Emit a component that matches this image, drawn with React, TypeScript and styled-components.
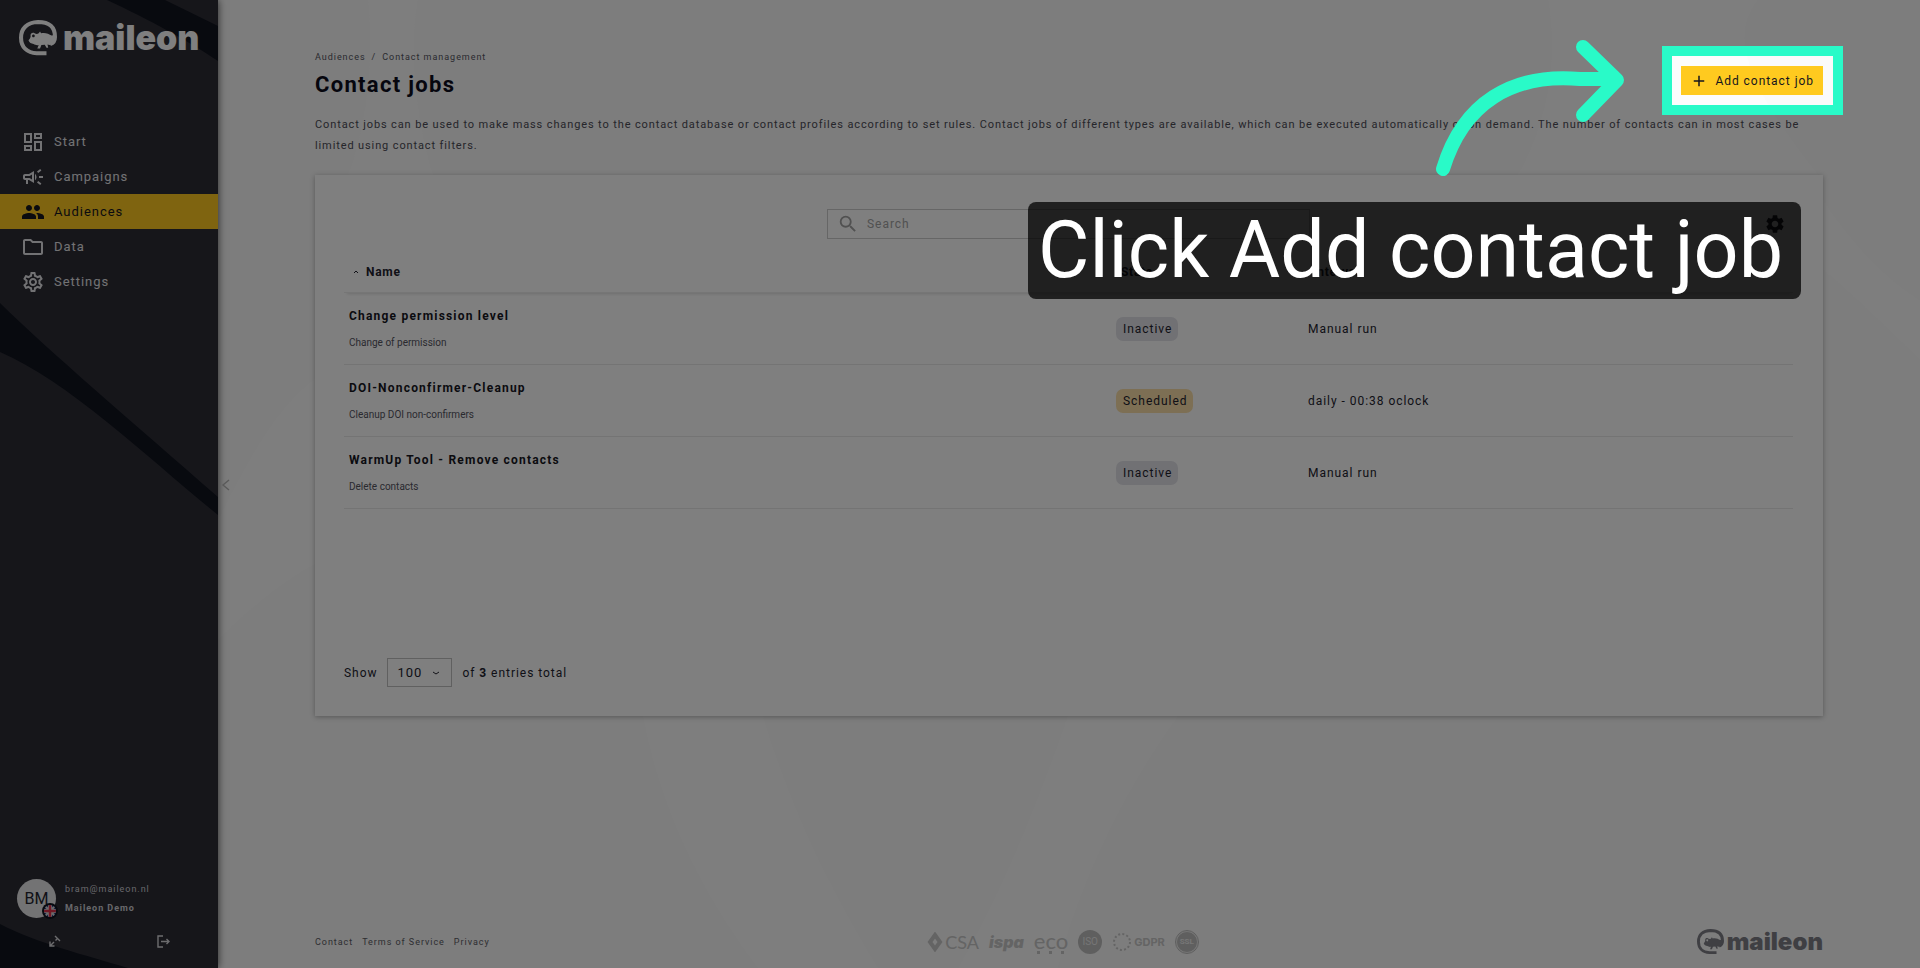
import React from 'react';
import styled, { createGlobalStyle } from 'styled-components';
import {
  MdOutlineDashboard,
  MdOutlineCampaign,
  MdPeople,
  MdOutlineFolder,
  MdOutlineSettings,
  MdSettings,
  MdSearch,
  MdAdd,
} from 'react-icons/md';

const tracking = '0.08em';

const GlobalStyle = createGlobalStyle`
  * { box-sizing: border-box; }
  body {
    margin: 0;
    background: #fafafa;
    color: #22222e;
    font-family: Roboto, "Liberation Sans", sans-serif;
    font-size: 12px;
    line-height: 20px;
    letter-spacing: ${tracking};
  }
  button, input, select { font: inherit; letter-spacing: inherit; color: inherit; }
  a { color: inherit; text-decoration: none; }
`;

const Page = styled.div`
  display: flex;
  min-height: 100vh;
`;

/* ---------- sidebar ---------- */

const Sidebar = styled.aside`
  position: relative;
  z-index: 1;
  flex: none;
  width: 218px;
  display: flex;
  flex-direction: column;
  background: #2c2c35;
  color: #d9d9dd;
  box-shadow: 0 0 8px rgba(0, 0, 0, 0.7);
`;

const SidebarWaves = styled.svg`
  position: absolute;
  inset: 0;
  z-index: -1;
  width: 100%;
  height: 100%;
`;

const Brand = styled.a<{ $small?: boolean }>`
  display: flex;
  align-items: center;
  gap: ${(p) => (p.$small ? '3px' : '6px')};
  padding: ${(p) => (p.$small ? '0' : '20px 0 0 19px')};
  color: ${(p) => (p.$small ? '#7e7e86' : '#ffffff')};
  font-family: Inter, "Liberation Sans", sans-serif;
  font-size: ${(p) => (p.$small ? '24px' : '34px')};
  line-height: ${(p) => (p.$small ? '26px' : '36px')};
  font-weight: 900;
  letter-spacing: 0;
`;

const Nav = styled.nav`
  display: flex;
  flex-direction: column;
  margin-top: 68px;
`;

const NavItem = styled.a<{ $active?: boolean }>`
  display: flex;
  align-items: center;
  gap: 9px;
  height: 35px;
  padding-left: 21px;
  background: ${(p) => (p.$active ? '#ffc821' : 'transparent')};
  color: ${(p) => (p.$active ? '#16161e' : '#e4e4e8')};
  font-size: 13px;
  svg { width: 24px; height: 24px; }
`;

const Account = styled.div`
  display: flex;
  align-items: center;
  gap: 9px;
  margin-top: auto;
  padding-left: 17px;
`;

const Avatar = styled.div`
  position: relative;
  display: grid;
  place-items: center;
  width: 39px;
  height: 39px;
  border-radius: 50%;
  background: #e6e6e8;
  color: #22222e;
  font-size: 16px;
  letter-spacing: 0;
`;

const Flag = styled.svg`
  position: absolute;
  right: -2px;
  bottom: -1px;
  width: 16px;
  height: 16px;
`;

const AccountText = styled.div`
  display: flex;
  flex-direction: column;
  font-size: 9px;
  line-height: 19px;
  color: #d0d0d6;
`;

const AccountActions = styled.div`
  display: flex;
  justify-content: space-between;
  padding: 15px 47px 19px;
`;

const IconButton = styled.button`
  display: grid;
  place-items: center;
  padding: 0;
  border: 0;
  background: none;
  cursor: pointer;
`;

const CollapseButton = styled(IconButton)`
  position: absolute;
  left: 100%;
  top: 50%;
  width: 16px;
  height: 16px;
  margin-top: -7px;
  color: #b4b4b4;
`;

/* ---------- main column ---------- */

const Main = styled.main`
  position: relative;
  flex: 1;
  min-width: 0;
  display: flex;
  flex-direction: column;
  padding: 47px 97px 11px 97px;
`;

const Backdrop = styled.svg`
  position: absolute;
  inset: 0;
  z-index: -1;
  width: 100%;
  height: 100%;
`;

const Header = styled.header`
  display: flex;
  justify-content: space-between;
  align-items: flex-start;
`;

const Crumbs = styled.div`
  display: flex;
  gap: 6px;
  font-size: 9px;
  color: #55555f;
`;

const Title = styled.h1`
  margin: 2px 0 0;
  font-size: 22px;
  line-height: 32px;
  font-weight: 700;
  letter-spacing: 0.06em;
  color: #0c0c1c;
`;

const Intro = styled.p`
  margin: 13px 0 19px;
  font-size: 11px;
  line-height: 21px;
  letter-spacing: ${tracking};
  color: #4c4c56;
`;

const Spotlight = styled.div`
  position: relative;
  z-index: 10;
  margin-top: 19px;
`;

const AddButton = styled.button`
  display: flex;
  align-items: center;
  gap: 7px;
  height: 29px;
  padding: 0 9px;
  border: 0;
  background: #ffca1f;
  color: #16161e;
  white-space: nowrap;
  cursor: pointer;
  svg { width: 18px; height: 18px; }
`;

const SpotlightFrame = styled.div`
  position: absolute;
  inset: -20px -20px -20px -19px;
  border: 10px solid #29fac8;
  box-shadow: 0 0 0 9999px rgba(0, 0, 0, 0.5);
  pointer-events: none;
`;

const SpotlightArrow = styled.svg`
  position: absolute;
  right: 199px;
  top: -27px;
  width: 190px;
  height: 140px;
  pointer-events: none;
`;

const SpotlightTip = styled.div`
  position: absolute;
  right: 22px;
  top: 136px;
  padding: 0 18px 0 10px;
  border-radius: 8px;
  background: rgba(0, 0, 0, 0.75);
  color: #ffffff;
  font-size: 79px;
  line-height: 97px;
  letter-spacing: 0;
  white-space: nowrap;
  pointer-events: none;
`;

const Card = styled.section`
  display: flex;
  flex-direction: column;
  min-height: 541px;
  padding: 34px 30px 29px 29px;
  background: #ffffff;
  box-shadow: 0 1px 5px rgba(0, 0, 0, 0.3);
`;

const Toolbar = styled.div`
  display: grid;
  grid-template-columns: 1fr 483px 1fr;
  align-items: center;
`;

const SearchBox = styled.label`
  grid-column: 2;
  display: flex;
  align-items: center;
  gap: 8px;
  height: 30px;
  padding-left: 9px;
  border: 1px solid #cccccc;
  color: #a2a2a2;
  svg { width: 22px; height: 22px; }
`;

const SearchInput = styled.input`
  flex: 1;
  min-width: 0;
  padding: 0;
  border: 0;
  outline: 0;
  background: none;
  &::placeholder { color: #a2a2a2; opacity: 1; }
`;

const GearButton = styled(IconButton)`
  justify-self: end;
  margin-right: 7px;
  color: #22222e;
  svg { width: 22px; height: 22px; }
`;

const Table = styled.table`
  width: 100%;
  margin-top: 11px;
  table-layout: fixed;
  border-collapse: separate;
  border-spacing: 0;
`;

const Th = styled.th<{ $width?: string }>`
  width: ${(p) => p.$width ?? 'auto'};
  height: 43px;
  padding: 2px 10px 0;
  text-align: left;
  font-size: 12px;
  font-weight: 700;
  letter-spacing: 0.06em;
  border-bottom: 1px solid #ececec;
`;

const HeadRow = styled.tr`
  box-shadow: 0 4px 3px -3px rgba(0, 0, 0, 0.14);
`;

const SortLabel = styled.span`
  display: flex;
  align-items: center;
  gap: 8px;
`;

const Td = styled.td`
  height: 72px;
  padding: 0 5px;
  border-bottom: 1px solid #e8e8e8;
`;

const JobName = styled.div`
  padding-top: 2px;
  font-weight: 700;
  letter-spacing: 0.1em;
  color: #16161e;
`;

const JobKind = styled.div`
  margin-top: 7px;
  font-size: 10px;
  letter-spacing: 0;
  color: #55555f;
`;

const Badge = styled.span<{ $tone: 'idle' | 'scheduled' }>`
  display: inline-block;
  padding: 0 6px 0 7px;
  border-radius: 7px;
  line-height: 24px;
  background: ${(p) => (p.$tone === 'idle' ? '#e3e3e9' : '#fbdfa8')};
`;

const Pager = styled.div`
  display: flex;
  align-items: center;
  gap: 10px;
  margin-top: auto;
`;

const PageSize = styled.label`
  display: flex;
  align-items: center;
  gap: 10px;
`;

const SelectBox = styled.span`
  display: grid;
  align-items: center;
  width: 65px;
  height: 29px;
  border: 1px solid #c0c0c0;
  > * { grid-area: 1 / 1; }
  svg { justify-self: end; margin-right: 12px; pointer-events: none; }
`;

const Select = styled.select`
  appearance: none;
  height: 100%;
  padding: 0 9px;
  border: 0;
  background: none;
  font-size: 13px;
`;

const Footer = styled.footer`
  display: grid;
  grid-template-columns: 1fr auto 1fr;
  align-items: center;
  margin-top: auto;
  padding-bottom: 2px;
`;

const FooterLinks = styled.nav`
  display: flex;
  gap: 9px;
  font-size: 9px;
  color: #5c5c64;
`;

const Seals = styled.div`
  display: flex;
  align-items: center;
  gap: 10px;
  padding-right: 12px;
  color: #c8c8c8;
`;

const Seal = styled.span`
  display: flex;
  align-items: center;
  gap: 2px;
  font-family: Lato, sans-serif;
  font-size: 18px;
  letter-spacing: 0;
`;

const IspaSeal = styled(Seal)`
  font-family: Inter, sans-serif;
  font-size: 16px;
  font-style: italic;
  font-weight: 900;
`;

const EcoSeal = styled(Seal)`
  flex-direction: column;
  gap: 0;
  font-size: 22px;
  line-height: 20px;
`;

const GdprSeal = styled(Seal)`
  font-family: Inter, sans-serif;
  font-size: 11px;
  font-weight: 700;
`;

const RoundSeal = styled.span`
  display: grid;
  place-items: center;
  width: 24px;
  height: 24px;
  border-radius: 50%;
  background: #bebebe;
  color: #ececec;
  font-size: 10px;
  letter-spacing: 0;
`;

const RingSeal = styled(RoundSeal)`
  width: 22px;
  height: 22px;
  margin: 0 1px;
  border: 1px solid #ececec;
  outline: 1px solid #bebebe;
  font-size: 8px;
  font-weight: 700;
`;

const FooterBrand = styled.div`
  justify-self: end;
`;

function Chameleon({ width }: { width: number }) {
  return (
    <svg width={width} viewBox="0 0 112 104" fill="none" aria-hidden="true">
      <path
        d="M81 98H52C24 97 6 80 6 52C6 25 24 7 56 6C88 6 106 18 106 50C106 62 101 68 92 71"
        stroke="currentColor"
        strokeWidth="12"
      />
      <path
        d="M28 60C33 54 35 50 34 45C34 39 40 36 46 39C50 40 52 43 58 39L62 34L65 39C76 36 88 40 96 46L108 44C110 62 102 72 90 74L84 72L86 82H81L76 73L66 74L62 84H54L58 74C52 76 47 73 43 71C36 70 30 67 28 60ZM42 43a4 4 0 1 0 1 0Z"
        fill="currentColor"
        fillRule="evenodd"
      />
    </svg>
  );
}

function UkFlag() {
  return (
    <Flag viewBox="0 0 16 16" role="img" aria-label="English">
      <clipPath id="flag-disc">
        <circle cx="8" cy="8" r="6" />
      </clipPath>
      <circle cx="8" cy="8" r="8" fill="#10141e" />
      <g clipPath="url(#flag-disc)">
        <rect width="16" height="16" fill="#24408e" />
        <path d="M2 2l12 12M14 2L2 14" stroke="#d8d8d8" strokeWidth="2" />
        <path d="M8 0v16M0 8h16" stroke="#d8d8d8" strokeWidth="4" />
        <path d="M8 0v16M0 8h16" stroke="#e0304a" strokeWidth="2.4" />
      </g>
    </Flag>
  );
}

const navItems = [
  { label: 'Start', icon: <MdOutlineDashboard /> },
  { label: 'Campaigns', icon: <MdOutlineCampaign /> },
  { label: 'Audiences', icon: <MdPeople />, active: true },
  { label: 'Data', icon: <MdOutlineFolder /> },
  { label: 'Settings', icon: <MdOutlineSettings /> },
];

type Job = { name: string; kind: string; state: string; tone: 'idle' | 'scheduled'; interval: string };

const jobs: Job[] = [
  { name: 'Change permission level', kind: 'Change of permission', state: 'Inactive', tone: 'idle', interval: 'Manual run' },
  { name: 'DOI-Nonconfirmer-Cleanup', kind: 'Cleanup DOI non-confirmers', state: 'Scheduled', tone: 'scheduled', interval: 'daily - 00:38 oclock' },
  { name: 'WarmUp Tool - Remove contacts', kind: 'Delete contacts', state: 'Inactive', tone: 'idle', interval: 'Manual run' },
];

export default function App() {
  return (
    <Page>
      <GlobalStyle />
      <Sidebar>
        <SidebarWaves viewBox="0 0 218 968" preserveAspectRatio="none" fill="#10141e">
          <path d="M107 0H165L218 26V61C190 42 150 20 107 0Z" />
          <path d="M0 303C50 352 130 420 218 497V515C150 460 70 382 0 352Z" />
          <path d="M0 924C36 943 85 955 128 968H0Z" />
        </SidebarWaves>
        <Brand href="#">
          <Chameleon width={38} />
          maileon
        </Brand>
        <Nav>
          {navItems.map((item) => (
            <NavItem key={item.label} href="#" $active={item.active}>
              {item.icon}
              {item.label}
            </NavItem>
          ))}
        </Nav>
        <Account>
          <Avatar>
            BM
            <UkFlag />
          </Avatar>
          <AccountText>
            <span>bram@maileon.nl</span>
            <strong>Maileon Demo</strong>
          </AccountText>
        </Account>
        <AccountActions>
          <IconButton aria-label="Switch account">
            <svg width="16" height="16" viewBox="0 0 16 16" fill="none" stroke="currentColor" strokeWidth="1.4">
              <path d="M8 3l5 5M10.500 5.500L8.500 7.500M7 9l-4 4M3 8.500V13h4.500" />
            </svg>
          </IconButton>
          <IconButton aria-label="Log out">
            <svg width="16" height="16" viewBox="0 0 16 16" fill="none" stroke="currentColor" strokeWidth="1.4">
              <path d="M8 3H3v11h5M6 8.500h8M11.500 6l2.500 2.500-2.500 2.500" />
            </svg>
          </IconButton>
        </AccountActions>
        <CollapseButton aria-label="Collapse menu">
          <svg width="10" height="12" viewBox="0 0 10 12" fill="none" stroke="currentColor" strokeWidth="1.4">
            <path d="M8 1L2 6l6 5" />
          </svg>
        </CollapseButton>
      </Sidebar>

      <Main>
        <Backdrop viewBox="0 0 1702 968" preserveAspectRatio="none" fill="#fcfcfc">
          <path d="M0 640C40 600 90 560 150 540L150 380C90 330 20 480 0 520Z" />
          <path d="M150 0H200C190 60 200 120 215 175H130C150 120 155 60 150 0Z" />
          <path d="M425 716H545C580 830 620 900 660 968H540C480 890 440 800 425 716Z" />
          <path d="M1330 0H1540C1500 50 1560 120 1600 175H1300C1330 120 1340 60 1330 0Z" />
          <path d="M1605 200C1640 250 1670 280 1702 300V360C1660 320 1630 290 1605 270Z" />
          <path d="M740 968C790 880 820 800 850 716H960C900 800 860 890 840 968Z" />
        </Backdrop>
        <Header>
          <div>
            <Crumbs>
              <a href="#">Audiences</a>
              <span>/</span>
              <a href="#">Contact management</a>
            </Crumbs>
            <Title>Contact jobs</Title>
          </div>
          <Spotlight>
            <AddButton>
              <MdAdd />
              Add contact job
            </AddButton>
            <SpotlightFrame />
            <SpotlightTip role="tooltip">Click Add contact job</SpotlightTip>
            <SpotlightArrow
              viewBox="0 0 190 140"
              fill="none"
              stroke="#29fac8"
              strokeWidth="14"
              strokeLinecap="round"
              strokeLinejoin="round"
            >
              <path d="M9 130C29 64 78 34 146 40H180M149 8L183 41L149 76" />
            </SpotlightArrow>
          </Spotlight>
        </Header>
        <Intro>
          Contact jobs can be used to make mass changes to the contact database or contact profiles according to set
          rules. Contact jobs of different types are available, which can be executed automatically or on demand. The
          number of contacts can in most cases be limited using contact filters.
        </Intro>

        <Card>
          <Toolbar>
            <SearchBox>
              <MdSearch />
              <SearchInput type="search" placeholder="Search" aria-label="Search" />
            </SearchBox>
            <GearButton aria-label="Table settings">
              <MdSettings />
            </GearButton>
          </Toolbar>
          <Table>
            <thead>
              <HeadRow>
                <Th>
                  <SortLabel>
                    <svg width="4" height="4" viewBox="0 0 4 4" fill="none" stroke="currentColor" aria-hidden="true">
                      <path d="M0 3l2-2 2 2" />
                    </svg>
                    Name
                  </SortLabel>
                </Th>
                <Th $width="192px">State</Th>
                <Th $width="490px">Interval</Th>
              </HeadRow>
            </thead>
            <tbody>
              {jobs.map((job) => (
                <tr key={job.name}>
                  <Td>
                    <JobName>{job.name}</JobName>
                    <JobKind>{job.kind}</JobKind>
                  </Td>
                  <Td>
                    <Badge $tone={job.tone}>{job.state}</Badge>
                  </Td>
                  <Td>{job.interval}</Td>
                </tr>
              ))}
            </tbody>
          </Table>
          <Pager>
            <PageSize>
              Show
              <SelectBox>
                <Select defaultValue="100">
                  <option>100</option>
                </Select>
                <svg width="6" height="4" viewBox="0 0 6 4" fill="none" stroke="currentColor" aria-hidden="true">
                  <path d="M0 1l3 2 3-2" />
                </svg>
              </SelectBox>
            </PageSize>
            <span>
              of <strong>3</strong> entries total
            </span>
          </Pager>
        </Card>

        <Footer>
          <FooterLinks>
            <a href="#">Contact</a>
            <a href="#">Terms of Service</a>
            <a href="#">Privacy</a>
          </FooterLinks>
          <Seals>
            <Seal>
              <svg width="16" height="20" viewBox="0 0 16 20" fill="none" stroke="currentColor" strokeWidth="4">
                <path d="M8 3l5 7-5 7-5-7z" />
              </svg>
              CSA
            </Seal>
            <IspaSeal>ispa</IspaSeal>
            <EcoSeal>
              eco
              <svg width="28" height="3" viewBox="0 0 28 3" fill="currentColor">
                <path d="M0 0h3v3H0zM12 0h3v3h-3zM24 0h3v3h-3z" />
              </svg>
            </EcoSeal>
            <RoundSeal>ISO</RoundSeal>
            <GdprSeal>
              <svg width="20" height="20" viewBox="0 0 20 20" fill="none" stroke="currentColor" strokeWidth="2">
                <circle cx="10" cy="10" r="8" strokeDasharray="2 2.2" />
              </svg>
              GDPR
            </GdprSeal>
            <RingSeal>SSL</RingSeal>
          </Seals>
          <FooterBrand>
            <Brand href="#" $small>
              <Chameleon width={27} />
              maileon
            </Brand>
          </FooterBrand>
        </Footer>
      </Main>
    </Page>
  );
}
